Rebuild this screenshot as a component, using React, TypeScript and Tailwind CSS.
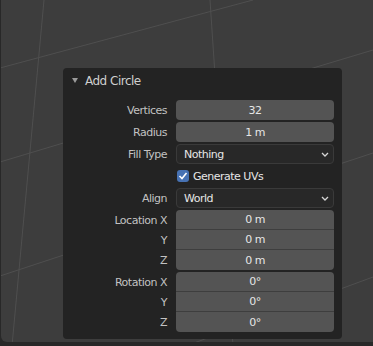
import { ReactNode } from "react"

const font = { fontFamily: '"DejaVu Sans", "Liberation Sans", sans-serif' }

function Label({ children }: { children?: ReactNode }) {
  return (
    <div className="w-[96px] shrink-0 text-right text-[11px] leading-none text-[#c2c2c2]">
      {children}
    </div>
  )
}

function NumberField({ value }: { value: string }) {
  return (
    <div className="flex h-5 flex-1 items-center justify-center rounded-[4px] bg-[#545454] text-[11px] leading-none text-[#e6e6e6]">
      {value}
    </div>
  )
}

function Chevron() {
  return (
    <svg width="8" height="5" viewBox="0 0 8 5" className="text-[#d6d6d6]">
      <path d="M1 1 L4 4 L7 1" fill="none" stroke="currentColor" strokeWidth="1.3" />
    </svg>
  )
}

function Dropdown({ value }: { value: string }) {
  return (
    <div className="flex h-5 flex-1 items-center justify-between rounded-[4px] border border-[#3a3a3a] bg-[#282828] pl-[7px] pr-[4px] text-[11px] leading-none text-[#e6e6e6]">
      <span>{value}</span>
      <Chevron />
    </div>
  )
}

function Row({ label, children }: { label?: string; children: ReactNode }) {
  return (
    <div className="flex items-center gap-[9px]">
      <Label>{label}</Label>
      {children}
    </div>
  )
}

function VectorGroup({ title, unit }: { title: string; unit: string }) {
  const axes = ["X", "Y", "Z"]
  return (
    <div className="flex gap-[9px]">
      <div className="flex w-[96px] shrink-0 flex-col">
        {axes.map((a, i) => (
          <div key={a} className="flex h-5 items-center justify-end text-[11px] leading-none text-[#c2c2c2]">
            {i === 0 ? `${title} ${a}` : a}
          </div>
        ))}
      </div>
      <div className="flex flex-1 flex-col overflow-hidden rounded-[4px] bg-[#545454] divide-y divide-[#3e3e3e]">
        {axes.map((a) => (
          <div key={a} className="flex h-5 items-center justify-center text-[11px] leading-none text-[#e6e6e6]">
            {unit}
          </div>
        ))}
      </div>
    </div>
  )
}

export default function App() {
  return (
    <div className="h-[346px] w-[373px] overflow-hidden bg-[#282828] tracking-[-0.5px]" style={font}>
      <div className="relative ml-[1px] h-[342px] overflow-hidden rounded-bl-[6px] bg-[#3d3d3d] pl-[62px] pt-[68px]">
        {/* viewport grid */}
        <svg className="absolute inset-0" width="372" height="342" viewBox="1 0 372 342">
          <g stroke="#4f4f4f" strokeWidth="1" fill="none">
            <line x1="0" y1="68" x2="253" y2="0" />
            <line x1="0" y1="162" x2="373" y2="50" />
            <line x1="0" y1="276" x2="373" y2="153" />
            <line x1="194" y1="343" x2="373" y2="277" />
            <line x1="44" y1="0" x2="12" y2="346" />
            <line x1="210" y1="0" x2="233" y2="346" />
          </g>
        </svg>

        <div className="relative h-[271px] w-[279px] rounded-[4px] bg-[#232323] px-[8px]">
          <div className="flex h-[24px] items-center pt-[1px]">
            <svg width="6" height="5" viewBox="0 0 6 5" className="ml-[1px]">
              <path d="M0 0 L6 0 L3 5 Z" fill="#9a9a9a" />
            </svg>
            <span className="ml-[7px] text-[12px] leading-none text-[#cfcfcf]">Add Circle</span>
          </div>

          <div className="mt-[8px] flex flex-col gap-[2px]">
            <Row label="Vertices">
              <NumberField value="32" />
            </Row>
            <Row label="Radius">
              <NumberField value="1 m" />
            </Row>
            <Row label="Fill Type">
              <Dropdown value="Nothing" />
            </Row>
            <Row>
              <div className="flex h-5 flex-1 items-center">
                <div className="ml-[1px] flex h-[12px] w-[12px] items-center justify-center rounded-[3px] bg-[#4772b3]">
                  <svg width="10" height="10" viewBox="0 0 10 10">
                    <path d="M1.5 5 L4 7.5 L8.5 2" fill="none" stroke="#ffffff" strokeWidth="1.6" />
                  </svg>
                </div>
                <span className="ml-[4px] text-[11px] leading-none text-[#e6e6e6]">Generate UVs</span>
              </div>
            </Row>
            <Row label="Align">
              <Dropdown value="World" />
            </Row>
            <VectorGroup title="Location" unit="0 m" />
            <VectorGroup title="Rotation" unit="0°" />
          </div>
        </div>
      </div>
    </div>
  )
}
